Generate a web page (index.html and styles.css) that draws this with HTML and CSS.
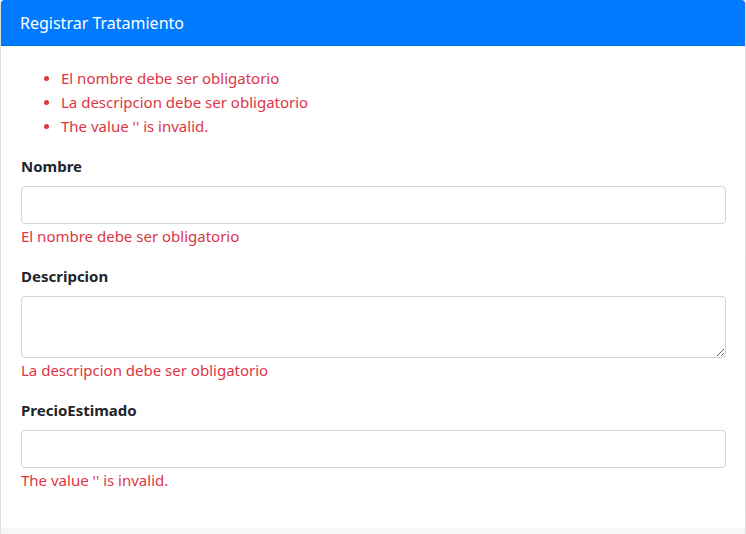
FILE: index.html
```html
<!DOCTYPE html>
<html lang="es">
<head>
<meta charset="utf-8">
<title>Registrar Tratamiento</title>
<link rel="stylesheet" href="styles.css">
</head>
<body>
<div class="card">
  <div class="card-header">Registrar Tratamiento</div>
  <div class="card-body">
    <form>
      <ul class="summary">
        <li>El nombre debe ser obligatorio</li>
        <li>La descripcion debe ser obligatorio</li>
        <li>The value '' is invalid.</li>
      </ul>
      <div class="form-group">
        <label class="label" for="nombre">Nombre</label>
        <input class="control" id="nombre" type="text">
        <span class="error">El nombre debe ser obligatorio</span>
      </div>
      <div class="form-group">
        <label class="label" for="descripcion">Descripcion</label>
        <textarea class="control area" id="descripcion" rows="2"></textarea>
        <span class="error">La descripcion debe ser obligatorio</span>
      </div>
      <div class="form-group">
        <label class="label" for="precio">PrecioEstimado</label>
        <input class="control" id="precio" type="text">
        <span class="error">The value '' is invalid.</span>
      </div>
    </form>
  </div>
  <div class="card-footer"></div>
</div>
</body>
</html>
```
FILE: styles.css
```css
html, body {
  margin: 0;
  padding: 0;
  background: #fff;
}
body {
  font-family: "Noto Sans", "Open Sans", sans-serif;
  font-size: 15px;
  line-height: 24px;
  color: #212529;
}
.card {
  border: 1px solid rgba(0, 0, 0, 0.125);
  border-top: 0;
  border-radius: 4px;
  width: 746px;
  box-sizing: border-box;
  overflow: hidden;
}
.card-header {
  background: #007bff;
  color: #fff;
  font-size: 16px;
  line-height: 24px;
  padding: 11px 20px 10px;
  border-bottom: 1px solid rgba(0, 0, 0, 0.125);
  border-radius: 4px 4px 0 0;
  margin: 0 -1px;
}
.card-body {
  padding: 20px 19px 20px 20px;
}
form {
  margin: 0;
}
.summary {
  margin: 0 0 16px;
  padding-left: 40px;
  color: #dc3545;
}
.summary li::marker {
  font-size: 14px;
}
.form-group {
  margin-bottom: 16px;
}
.label {
  display: inline-block;
  font-weight: 700;
  margin-bottom: 8px;
}
.control {
  display: block;
  box-sizing: border-box;
  width: 100%;
  height: 38px;
  margin: 0;
  padding: 6px 12px;
  font: inherit;
  color: #495057;
  background: #fff;
  border: 1px solid #ced4da;
  border-radius: 4px;
}
.area {
  height: 62px;
  resize: vertical;
}
.error {
  color: #dc3545;
}
.card-footer {
  background: #f7f7f7;
  height: 20px;
}
```
